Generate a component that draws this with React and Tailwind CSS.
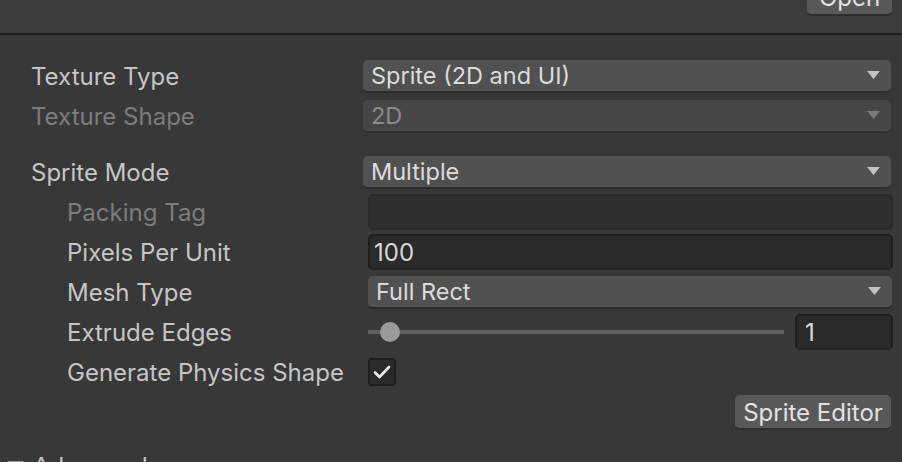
import React from 'react';

const font = { fontFamily: 'Inter, "Noto Sans", sans-serif' };

// small down-pointing triangle used by popups and the foldout
const Arrow = ({ dim }) => (
  <svg width="13" height="8" viewBox="0 0 13 8" className="shrink-0">
    <path d="M0 0 H13 L6.5 8 Z" fill={dim ? '#7a7a7a' : '#c2c2c2'} />
  </svg>
);

const Label = ({ children, indent, dim }) => (
  <div
    className={`shrink-0 whitespace-nowrap pt-[2px] ${indent ? 'w-[368px] pl-[67px]' : 'w-[363px] pl-[31px]'} ${
      dim ? 'text-[#7c7c7c]' : 'text-[#c6c6c6]'
    }`}
  >
    {children}
  </div>
);

const Popup = ({ value, dim }) => (
  <div
    className={`flex items-center justify-between h-[33px] w-[528px] rounded-[5px] border-b-2 pl-[8px] pr-[11px] ${
      dim
        ? 'bg-[#464646] border-[#303030] text-[#8a8a8a]'
        : 'bg-[#515151] border-[#2b2b2b] text-[#dcdcdc]'
    }`}
  >
    <span className="text-[23.5px] pt-[1px]">{value}</span>
    <Arrow dim={dim} />
  </div>
);

const Field = ({ value, dim, className = '' }) => (
  <div
    className={`flex items-center h-[36px] rounded-[5px] border-2 pl-[4px] pt-[2px] ${
      dim
        ? 'bg-[#2f2f2f] border-[#2a2a2a] text-[#8a8a8a]'
        : 'bg-[#2a2a2a] border-[#1f1f1f] border-b-[#262626] text-[#d8d8d8]'
    } ${className}`}
  >
    {value}
  </div>
);

const Row = ({ children }) => (
  <div className="flex items-center h-[40px]">{children}</div>
);

const App = () => {
  return (
    <div
      className="w-[902px] h-[462px] overflow-hidden bg-[#383838] text-[24px] leading-none"
      style={font}
    >
      {/* header with the Open button */}
      <div className="h-[33px] bg-[#3c3c3c] flex justify-end items-start pr-[10px]">
        <div className="-mt-[18px] h-[34px] w-[85px] rounded-[5px] bg-[#585858] border-b-2 border-[#2d2d2d] flex items-center justify-center text-[#e2e2e2]">
          Open
        </div>
      </div>
      <div className="h-[2px] bg-[#1f1f1f]" />

      <div className="pt-[21px]">
        <Row>
          <Label>Texture Type</Label>
          <Popup value="Sprite (2D and UI)" />
        </Row>
        <Row>
          <Label dim>Texture Shape</Label>
          <Popup value="2D" dim />
        </Row>

        <div className="h-[16px]" />

        <Row>
          <Label>Sprite Mode</Label>
          <Popup value="Multiple" />
        </Row>
        <Row>
          <Label indent dim>Packing Tag</Label>
          <Field value="" dim className="w-[525px]" />
        </Row>
        <Row>
          <Label indent>Pixels Per Unit</Label>
          <Field value="100" className="w-[525px]" />
        </Row>
        <Row>
          <Label indent>Mesh Type</Label>
          <div className="w-[524px] h-[33px] flex items-center justify-between rounded-[5px] border-b-2 border-[#2b2b2b] bg-[#515151] text-[#dcdcdc] pl-[8px] pr-[11px]">
            <span className="text-[23.5px] pt-[1px]">Full Rect</span>
            <Arrow />
          </div>
        </Row>
        <Row>
          <Label indent>Extrude Edges</Label>
          <div className="flex items-center w-[525px]">
            <div className="relative w-[416px] h-[4px] bg-[#5e5e5e]">
              <div className="absolute left-[12px] -top-[8px] w-[20px] h-[20px] rounded-full bg-[#9a9a9a]" />
            </div>
            <Field value="1" className="ml-[11px] w-[98px] pl-[8px]" />
          </div>
        </Row>
        <Row>
          <Label indent>Generate Physics Shape</Label>
          <div className="w-[28px] h-[28px] rounded-[4px] bg-[#2a2a2a] border-2 border-[#1f1f1f] flex items-center justify-center">
            <svg width="18" height="14" viewBox="0 0 18 14">
              <path d="M2 7.5 L6.5 12 L16 2" fill="none" stroke="#ececec" strokeWidth="2.6" strokeLinecap="round" strokeLinejoin="round" />
            </svg>
          </div>
        </Row>

        <div className="flex justify-end pr-[11px] pt-[3px]">
          <div className="h-[35px] w-[156px] rounded-[5px] bg-[#585858] border-b-2 border-[#2d2d2d] flex items-center justify-center pt-[2px] text-[#e2e2e2]">
            Sprite Editor
          </div>
        </div>

        {/* Advanced foldout, mostly below the fold */}
        <div className="flex items-start h-[40px] mt-[17px] pl-[7px] gap-[9px] text-[#c6c6c6]">
          <svg width="17" height="10" viewBox="0 0 17 10" className="mt-[14px] shrink-0">
            <path d="M0 0 H17 L8.5 10 Z" fill="#9a9a9a" />
          </svg>
          <span className="mt-[8px]">Advanced</span>
        </div>
      </div>
    </div>
  );
};

export default App;
